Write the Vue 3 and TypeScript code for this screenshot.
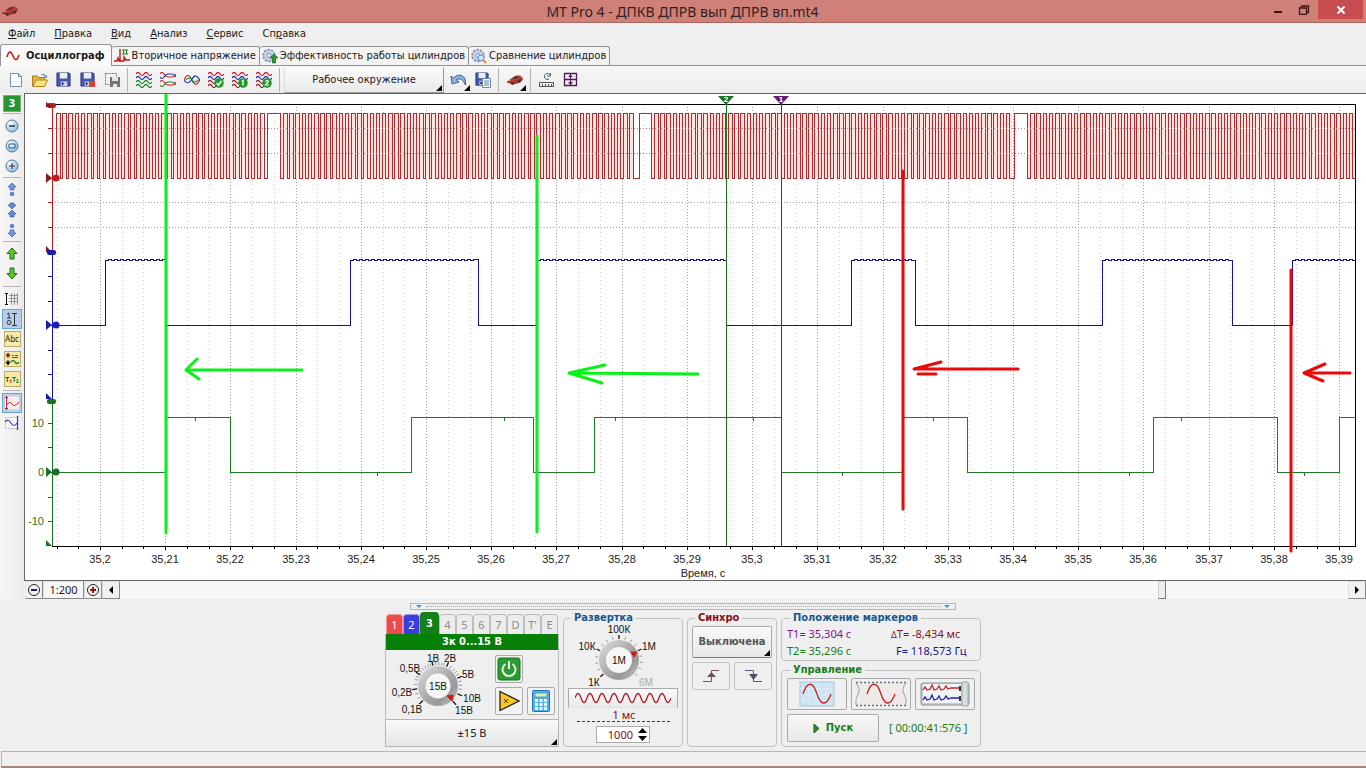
<script setup lang="ts">
import { computed, onBeforeUnmount, onMounted, ref } from 'vue'

interface MenuItem { pre: string; key: string; post: string }
const menu: MenuItem[] = [
  { pre: '', key: 'Ф', post: 'айл' },
  { pre: '', key: 'П', post: 'равка' },
  { pre: '', key: 'В', post: 'ид' },
  { pre: '', key: 'А', post: 'нализ' },
  { pre: '', key: 'С', post: 'ервис' },
  { pre: 'Сп', key: 'р', post: 'авка' },
]
const channelTabs = ['1', '2', '3', '4', '5', '6', '7', 'D', "T'", 'E']
const scroll = ref(851)
const points = ref('1000')

const chart = ref<HTMLElement | null>(null)
const w = ref(1341)
const h = ref(487)
let observer: ResizeObserver | null = null
onMounted(() => {
  observer = new ResizeObserver(() => {
    if (chart.value) {
      w.value = chart.value.clientWidth
      h.value = chart.value.clientHeight
    }
  })
  if (chart.value) observer.observe(chart.value)
})
onBeforeUnmount(() => observer?.disconnect())

// Signal space: x 0..1303, y 0..442, scaled to the size of the plot.
const left = 27
const top = 10
const X = (v: number): number => Math.round(left + (v * (w.value - 38)) / 1303)
const Y = (v: number): number => Math.round(top + (v * (h.value - 44)) / 442)

const ticks = computed(() => {
  const out: { x: number; major: boolean; label: string }[] = []
  for (let i = -2; i <= 57; i++) {
    const major = i % 3 === 0
    const t = 35.2 + i / 300
    out.push({ x: X(48 + (i * 65.21) / 3), major, label: major ? String(Number(t.toFixed(2))).replace('.', ',') : '' })
  }
  return out
})

function teeth(): [number, number][] {
  const out: [number, number][] = []
  for (let i = 0; i < 34; i++) out.push([4 + i * 6.18, 7.6 + i * 6.18])
  out.push([215, 228])
  for (let i = 0; i < 57; i++) out.push([231 + i * 6.18, 234.6 + i * 6.18])
  out.push([587, 599])
  for (let i = 0; i < 58; i++) out.push([602 + i * 6.17, 605.6 + i * 6.17])
  out.push([962, 975])
  for (let i = 0; i < 52; i++) out.push([978 + i * 6.25, 981.6 + i * 6.25])
  return out
}
function square(pulses: [number, number][], low: number, high: number, ripple = false): string {
  let d = `M${X(0)} ${Y(low)}`
  for (const [a, b] of pulses) {
    const end = X(Math.min(b, 1303))
    d += `H${X(a)}V${Y(high)}`
    if (ripple) {
      for (let x = X(a) + 3, up = true; x < end - 2; x += 3, up = !up) d += `H${x}v${up ? -1 : 1}`
    }
    d += `H${end}`
    if (b < 1303) d += `V${Y(low)}`
  }
  if (pulses[pulses.length - 1][1] < 1303) d += `H${X(1303)}`
  return d
}
const redWave = computed(() => square(teeth(), 74, 9))
const bluePulses: [number, number][] = [[53, 114], [298, 426], [485, 674], [799, 863], [1050, 1180], [1240, 1310]]
const blueWave = computed(() => square(bluePulses, 221, 156, true))
const greenWave = computed(() =>
  square([[114, 178], [359, 481], [542, 729], [851, 915], [1101, 1225], [1287, 1310]], 368, 313))
const greenNoise = computed(() =>
  [[143, 313], [325, 368], [452, 313], [563, 313], [701, 313], [790, 368], [881, 313], [1077, 368], [1129, 313], [1252, 368]]
    .map(([x, y]) => `M${X(x)} ${Y(y)}v4`).join(''))
const axisTicks = (from: number[]): string => from.map((y) => `M${left - 4} ${Y(y)}h4`).join('')

function pen(pts: number[][]): string {
  return pts.map(([x, y], i) => `${i ? 'L' : 'M'}${X(x)} ${Y(y)}`).join('')
}
const greenPen = computed(() =>
  pen([[114, -12], [114, 429]]) + pen([[485, 32], [485, 428]]) +
  pen([[250, 266], [134, 266]]) + pen([[145, 255], [134, 266], [147, 275]]) +
  pen([[646, 270], [517, 269]]) + pen([[553, 261], [517, 269], [550, 279]]))
const redPen = computed(() =>
  pen([[851, 67], [851, 405]]) + pen([[1239, 166], [1239, 447]]) +
  pen([[966, 265], [862, 265], [889, 258]]) + pen([[866, 270], [884, 270]]) + pen([[867, 265], [875, 262]]) +
  pen([[1298, 269], [1252, 269]]) + pen([[1273, 260], [1252, 269], [1271, 277]]))

function knobTick(cx: number, cy: number, deg: number, r1: number, r2: number): string {
  const a = (deg * Math.PI) / 180
  const p = (r: number) => `${(cx + r * Math.cos(a)).toFixed(2)} ${(cy - r * Math.sin(a)).toFixed(2)}`
  return `M${p(r1)}L${p(r2)}`
}
const voltMajor = [224, 188, 148, 104, 66, 22, -22, -46].map((a) => knobTick(52, 36, a, 21, 26)).join('')
const voltMinor = [212, 200, 176, 164, 156, 140, 132, 124, 116, 110, 96, 88, 80, 74, 56, 46, 38, 30, 12, 2, -8].map((a) => knobTick(52, 36, a, 21, 24)).join('')
const voltLabels: [string, number, number][] = [['1В', 47, 12], ['2В', 64, 12], ['0,5В', 24, 22], ['5В', 82, 28], ['0,2В', 16, 46], ['10В', 86, 52], ['0,1В', 26, 63], ['15В', 78, 64]]
const rateMajor = [222, 154, 90, 26].map((a) => knobTick(52, 36, a, 21, 25)).join('')
const rateMinor = [205, 188, 172, 138, 122, 106, 74, 58, 42, 10, -6, -22, -40].map((a) => knobTick(52, 36, a, 21, 24)).join('')
const rateLabels: [string, number, number][] = [['100К', 52, 9], ['10К', 20, 26], ['1М', 82, 26], ['1К', 27, 62]]
</script>

<template>
  <div class="window">
    <svg class="defs" width="0" height="0" aria-hidden="true">
      <defs>
        <radialGradient id="ball" cx="35%" cy="30%" r="75%"><stop offset="0" stop-color="#fff" /><stop offset="1" stop-color="#86b9dc" /></radialGradient>
        <linearGradient id="metal" x1="0" y1="0" x2="1" y2="1"><stop offset="0" stop-color="#e0e0e0" /><stop offset=".5" stop-color="#aaa" /><stop offset=".7" stop-color="#999" /><stop offset="1" stop-color="#c8c8c8" /></linearGradient>
        <symbol id="car" viewBox="0 0 18 12"><path d="M0 8l5-4 5-3 5 0 3 3-1 3-5 3-5 1-7-2z" fill="#b5403a" /><path d="M5 5l4-3 5-.500-3 3z" fill="#5b3836" /><path d="M1 8l6 1 10-4" stroke="#8a211c" fill="none" /><path d="M1 6l3 1" stroke="#e9a7a0" /><circle cx="6" cy="10" r="1.500" fill="#333" /><circle cx="14" cy="7.500" r="1.500" fill="#333" /></symbol>
        <symbol id="floppy" viewBox="0 0 16 16"><path d="M1 1h13l1 1v13H1z" fill="#4458b0" stroke="#29347c" /><path d="M4 1h8v6H4z" fill="#e8eefa" /><path d="M5 10h7v5H5z" fill="#cfd4e0" /><path d="M6 11h2v3H6z" fill="#29347c" /></symbol>
        <symbol id="waves" viewBox="0 0 16 16"><g fill="none" stroke-width="1.300"><path d="M0 2q2-3 4 0t4 0t4 0t4 0" stroke="#d02030" /><path d="M0 6q2-3 4 0t4 0t4 0t4 0" stroke="#2030c0" /><path d="M0 10q2-3 4 0t4 0t4 0t4 0M0 14q2-3 4 0t4 0t4 0t4 0" stroke="#138a20" /></g></symbol>
        <symbol id="waves2" viewBox="0 0 16 16"><g fill="none" stroke-width="1.300"><path d="M0 2q2-3 4 0t4 0t4 0t4 0" stroke="#d02030" /><path d="M0 6q2-3 4 0t4 0t4 0t4 0" stroke="#2030c0" /><path d="M0 10q2-3 4 0t4 0M0 14q2-3 4 0t4 0" stroke="#a02030" /></g><circle cx="11" cy="11" r="4.800" fill="#259a2c" /></symbol>
        <symbol id="gear" viewBox="0 0 16 16"><circle cx="7" cy="7.500" r="5.500" fill="#c3cde3" stroke="#7f8fb4" stroke-width="2.500" stroke-dasharray="2.200 1.200" /><circle cx="7" cy="7.500" r="5" fill="#c9d3e8" /><circle cx="7" cy="7.500" r="2" fill="#f4f4f4" stroke="#7f8fb4" /></symbol>
      </defs>
    </svg>

    <header class="titlebar">
      <svg class="appicon" width="16" height="12"><use href="#car" width="16" height="12" /></svg>
      <h1>MT Pro 4 - ДПКВ ДПРВ вып ДПРВ вп.mt4</h1>
      <div class="winbtns">
        <button aria-label="Свернуть"><svg width="10" height="10"><path d="M1 7h8" stroke="#3b1614" stroke-width="2" /></svg></button>
        <button aria-label="Развернуть"><svg width="12" height="10"><path d="M1.500 3h7v6.500h-7z M3.500 3V1H10.500V7.500H9" fill="none" stroke="#3b1614" stroke-width="1.300" /></svg></button>
        <button class="close" aria-label="Закрыть"><svg width="10" height="10"><path d="M1.500 1.500l7 7M8.500 1.500l-7 7" stroke="#fff" stroke-width="2" /></svg></button>
      </div>
    </header>

    <nav class="menu">
      <button v-for="m in menu" :key="m.key">{{ m.pre }}<u>{{ m.key }}</u>{{ m.post }}</button>
    </nav>

    <div class="tabs" role="tablist">
      <button class="tab active" role="tab" aria-selected="true">
        <svg width="14" height="14"><path d="M1 8C3 1 5 2 7 7s4 5 6-1" fill="none" stroke="#c01818" stroke-width="1.500" /></svg>Осциллограф
      </button>
      <button class="tab" role="tab">
        <svg width="16" height="16"><path d="M0 13h3l1-3 1 3h1V2M6 13h4V9l2 3h4M6 14V1" fill="none" stroke="#c01818" stroke-width="1.400" /><path d="M8 2h6M8 6h6M9.500 2v4M12.500 2v4" stroke="#198522" fill="none" /></svg>Вторичное напряжение
      </button>
      <button class="tab" role="tab">
        <svg width="16" height="16"><use href="#gear" width="16" height="16" /><path d="M12 6l4 4h-2.500v5h-3v-5H8z" fill="#2f9a30" stroke="#14681a" stroke-width=".7" /></svg>Эффективность работы цилиндров
      </button>
      <button class="tab" role="tab">
        <svg width="16" height="16"><use href="#gear" width="16" height="16" /><path d="M12 12l3 3" stroke="#e08a2c" stroke-width="2" /><circle cx="10" cy="10" r="3" fill="#cfe8fb" stroke="#5d8fc4" /></svg>Сравнение цилиндров
      </button>
    </div>

    <div class="toolbar">
      <button class="tool" aria-label="Новый"><svg width="16" height="16"><path d="M2.500 1.500h8l3 3v10h-11z" fill="#fbfdff" stroke="#7a8fa8" /><path d="M10.500 1.500v3h3" fill="none" stroke="#7a8fa8" /></svg></button>
      <button class="tool" aria-label="Открыть"><svg width="16" height="16"><path d="M.5 14V4h5l1 1.500h6V14z" fill="#e8b53c" stroke="#a87a18" /><path d="M1 14.500L4 8h11.500l-3 6.500z" fill="#ffe084" stroke="#b4861e" /><path d="M9 3q3-3 5 1l1-1v3h-3l1-1q-1-2-4-2z" fill="#7a9ac0" /></svg></button>
      <button class="tool" aria-label="Сохранить"><svg width="16" height="16"><use href="#floppy" width="15" height="15" /></svg></button>
      <button class="tool" aria-label="Сохранить как"><svg width="16" height="16"><use href="#floppy" width="15" height="15" /><path d="M9 9h6v6H9z" fill="#d4482c" /></svg></button>
      <button class="tool" aria-label="Сохранить фрагмент"><svg width="16" height="16"><path d="M1.500 1.500h11v11h-11z" fill="none" stroke="#777" stroke-dasharray="2 1" /><path d="M6 5h10v10H6z" fill="#707478" /><path d="M8 5h6v4H8zM9 12h4v3H9z" fill="#e6e6e6" /></svg></button>
      <i class="vsep"></i>
      <button class="tool" aria-label="Сигналы"><svg width="16" height="16"><use href="#waves" width="16" height="16" /></svg></button>
      <button class="tool" aria-label="Наложение"><svg width="16" height="16"><g fill="none" stroke-width="1.200"><path d="M0 2q2-3 4 0t4 3 4 0 4-3" stroke="#d02030" /><path d="M0 5q2 3 4 0t4-3 4 0 4 3" stroke="#2030c0" /><path d="M0 10q2-3 4 0t4 3 4 0 4-3" stroke="#d02030" /><path d="M0 13q2 3 4 0t4-3 4 0 4 3" stroke="#138a20" /></g></svg></button>
      <button class="tool" aria-label="Совмещение"><svg width="16" height="16"><g fill="none" stroke-width="1.200"><path d="M0 8q4-9 8 0t8-1" stroke="#c02030" /><path d="M0 8q4 6 8-1t8 2" stroke="#2030a0" /><path d="M2 8q3-4 6 0t6 0" stroke="#138a20" /></g></svg></button>
      <button class="tool" aria-label="Применить"><svg width="16" height="16"><use href="#waves2" width="16" height="16" /><path d="M8.500 11l2 2 3-4" fill="none" stroke="#fff" stroke-width="1.500" /></svg></button>
      <button class="tool" aria-label="Набор 1"><svg width="16" height="16"><use href="#waves2" width="16" height="16" /><path d="M10 9.500l1-1v5" fill="none" stroke="#fff" stroke-width="1.300" /></svg></button>
      <button class="tool" aria-label="Набор 2"><svg width="16" height="16"><use href="#waves2" width="16" height="16" /><path d="M9.500 9.500q2-2 3 0L9.500 13h3.500" fill="none" stroke="#fff" stroke-width="1.200" /></svg></button>
      <i class="vsep"></i>
      <button class="env">Рабочее окружение</button>
      <button class="tool drop" aria-label="Отменить"><svg width="18" height="16"><path d="M1 4l1 8 7-2-2.500-2q5-4 9 5 1-9-6-10-3 0-6 3z" fill="#8fb4dc" stroke="#3e6392" /></svg></button>
      <button class="tool" aria-label="Сохранить окружение"><svg width="16" height="16"><use href="#floppy" width="14" height="14" /><path d="M7.500 6.500h8v9h-8z" fill="#f3f7fc" stroke="#6787ab" /><path d="M9 9h5M9 11h5M9 13h5" stroke="#6787ab" /></svg></button>
      <i class="vsep"></i>
      <button class="tool drop" aria-label="Автомобиль"><svg width="16" height="12"><use href="#car" width="16" height="12" /></svg></button>
      <i class="vsep"></i>
      <button class="tool" aria-label="Линейка"><svg width="16" height="16"><path d="M.5 10.500h14v4H.5zM3.500 12v2M6.500 12v2M9.500 12v2M12.500 12v2" fill="none" stroke="#555" /><path d="M10 7a3 3 0 1 1 1-4M11.500 1v3H8" fill="none" stroke="#45617b" /></svg></button>
      <button class="tool" aria-label="Выравнивание"><svg width="16" height="16"><path d="M1.500 1.500h12v12h-12zM1 7.500h13" fill="#f6eef6" stroke="#51184f" stroke-width="1.300" /><path d="M7.500 1v13" stroke="#51184f" /><path d="M5 5h5L7.500 2.500zM5 10h5l-2.500 3z" fill="#51184f" /></svg></button>
    </div>

    <main class="work">
      <aside class="side">
        <span class="badge">3</span>
        <hr />
        <button aria-label="Уменьшить"><svg width="14" height="14"><circle cx="7" cy="7" r="6" fill="url(#ball)" stroke="#54789c" /><path d="M4 7h6" stroke="#16385e" stroke-width="1.500" /></svg></button>
        <button aria-label="По размеру"><svg width="14" height="14"><circle cx="7" cy="7" r="6" fill="url(#ball)" stroke="#54789c" /><path d="M4 5h6v4H4z" fill="none" stroke="#2c5e92" /></svg></button>
        <button aria-label="Увеличить"><svg width="14" height="14"><circle cx="7" cy="7" r="6" fill="url(#ball)" stroke="#54789c" /><path d="M4 7h6M7 4v6" stroke="#442a64" stroke-width="1.200" /></svg></button>
        <hr />
        <button aria-label="Вверх"><svg width="14" height="16"><path d="M7 1l4 4H9v3H5V5H3z" fill="#7194df" stroke="#3d5fb0" stroke-width=".7" /><circle cx="7" cy="12" r="2.300" fill="#6085d4" /></svg></button>
        <button aria-label="Сжать"><svg width="14" height="16"><path d="M5 1h4v2h2L7 7 3 3h2zM7 8l4 4H9v3H5v-3H3z" fill="#6489db" stroke="#3d5fb0" stroke-width=".7" /></svg></button>
        <button aria-label="Вниз"><svg width="14" height="16"><circle cx="7" cy="4" r="2.300" fill="#6085d4" /><path d="M7 15l4-4H9V8H5v3H3z" fill="#7194df" stroke="#3d5fb0" stroke-width=".7" /></svg></button>
        <hr />
        <button aria-label="Канал вверх"><svg width="14" height="14"><path d="M7 1l5 5.500H9V12H5V6.500H2z" fill="#5cc62c" stroke="#206b17" /></svg></button>
        <button aria-label="Канал вниз"><svg width="14" height="14"><path d="M7 12l5-5.500H9V1H5v5.500H2z" fill="#5cc62c" stroke="#206b17" /></svg></button>
        <hr class="wide" />
        <button aria-label="Сетка"><svg width="16" height="14"><path d="M2.500 1v12M1 1.500h3M1 12.500h3" stroke="#111" /><path d="M5 3.500h9M5 6.500h9M5 9.500h9M7.500 1v12M10.500 1v12M13.500 1v12" stroke="#777" stroke-width=".7" /></svg></button>
        <button class="on" aria-label="Шкала"><svg width="16" height="16"><path d="M3 3l2-1v5M3 7h4M10.500 2v12M8 2.500h5M8 14.500h5" fill="none" stroke="#334" /><circle cx="5" cy="11.500" r="2" fill="none" stroke="#334" /></svg></button>
        <button class="yl" aria-label="Подписи"><span>Abc</span></button>
        <button class="yl" aria-label="Связь"><svg width="14" height="14"><path d="M3 1L1 4h4zM3 3v3" stroke="#8c1b14" fill="#8c1b14" /><path d="M3 13l-2-3h4zM3 11V8" stroke="#111" fill="#111" /><path d="M7 3.500h2M10 3.500h3M7 5.500h6" stroke="#a32" /><path d="M6 10q2-3 4 0t4 0" fill="none" stroke="#27842a" stroke-width="1.500" /></svg></button>
        <button class="yl" aria-label="Маркеры"><span><b class="ta">T₁</b><b class="tb">T₂</b></span></button>
        <hr />
        <button class="on" aria-label="График"><svg width="14" height="14"><path d="M0 .500h14v13H0z" fill="#fbecec" /><path d="M1.500 0v14M0 1.500h3M0 12.500h3M2 9q3-5 5-1t7-2" fill="none" stroke="#c42430" /></svg></button>
        <button aria-label="Ось справа"><svg width="16" height="14"><path d="M1.500 1.500h12v11h-12z" fill="#fbfbff" stroke="#9aa" stroke-dasharray="1 1" /><path d="M13.500 0v14M1 6q3-4 6 1t6 0" fill="none" stroke="#2840a8" stroke-width="1.200" /></svg></button>
      </aside>

      <section class="view">
        <div ref="chart" class="chart">
          <svg class="plot" :width="w" :height="h">
            <g shape-rendering="crispEdges" fill="none">
              <path :d="ticks.filter(t => !t.major).map(t => `M${t.x + .5} ${top}V${Y(442)}`).join('')" stroke="#cfcacb" stroke-dasharray="1 3" />
              <path :d="ticks.filter(t => t.major).map(t => `M${t.x + .5} ${top}V${Y(442)}`).join('')" stroke="#a49da0" stroke-dasharray="1 2" />
              <rect :x="X(4)" :y="Y(9)" :width="X(211) - X(4)" :height="Y(74) - Y(9)" fill="#fde4e1" />
              <rect :x="X(228)" :y="Y(9)" :width="X(582) - X(228)" :height="Y(74) - Y(9)" fill="#fde4e1" />
              <rect :x="X(599)" :y="Y(9)" :width="X(960) - X(599)" :height="Y(74) - Y(9)" fill="#fde4e1" />
              <rect :x="X(975)" :y="Y(9)" :width="X(1303) - X(975)" :height="Y(74) - Y(9)" fill="#fde4e1" />
              <path :d="redWave" stroke="#a82e32" />
              <path :d="`M${left} ${Y(24)}H${X(1303)}M${left} ${Y(49)}H${X(1303)}`" stroke="#c98282" stroke-dasharray="1 2" />
              <path :d="`M${left} ${Y(98)}H${X(1303)}M${left} ${Y(123)}H${X(1303)}`" stroke="#b79fa2" stroke-dasharray="1 2" />
              <path :d="blueWave" stroke="#15158a" />
              <path :d="greenWave" stroke="#1c7c24" />
              <path :d="greenNoise" stroke="#1c7c24" />
              <path :d="`M${left} ${top}H${X(1303)}V${Y(442)}H${left}`" stroke="#000" />
              <path :d="ticks.map(t => `M${t.x + .5} ${Y(442)}v${t.major ? 4 : 3}`).join('')" stroke="#000" />
              <path :d="`M${left} ${top}V${Y(147)}` + axisTicks([24, 49, 74, 98, 123])" stroke="#b01c1c" />
              <path :d="`M${left} ${Y(148)}V${Y(296)}` + axisTicks([172, 197, 221, 246, 270])" stroke="#1616a8" />
              <path :d="`M${left} ${Y(296)}V${Y(442)}` + axisTicks([319, 343, 368, 393, 417])" stroke="#187222" />
              <path :d="`M${X(674)} ${top}V${Y(442)}`" stroke="#1c7423" />
              <path :d="`M${X(729)} ${top}V${Y(442)}`" stroke="#741a7c" />
            </g>
            <g fill="#c41c1c"><rect :x="left - 5" :y="top - 1" width="9" height="5" rx="2" /><path :d="`M${left - 6} ${top - 2}l6 5h-6z`" fill="#8a1c1c" /><path :d="`M${left - 6} ${Y(74) - 5}l6 5-6 5z`" fill="#8a1c1c" /><circle :cx="left + 4" :cy="Y(74)" r="3.500" /><path :d="`M${left - 6} ${Y(147) - 5}l6 6h-6z`" fill="#8a1c1c" /></g>
            <g fill="#1c1cb0"><rect :x="left - 5" :y="Y(147) - 1" width="9" height="5" rx="2" /><path :d="`M${left - 6} ${Y(221) - 5}l6 5-6 5z`" /><circle :cx="left + 4" :cy="Y(221)" r="3.500" /><path :d="`M${left - 6} ${Y(295) - 6}l6 6h-6z`" /></g>
            <g fill="#187222"><rect :x="left - 5" :y="Y(295)" width="9" height="5" rx="2" /><path :d="`M${left - 6} ${Y(368) - 5}l6 5-6 5z`" /><circle :cx="left + 4" :cy="Y(368)" r="3.500" /><path :d="`M${left - 6} ${Y(442) - 6}l6 6h-6z`" /></g>
            <path :d="`M${X(674) - 8} ${top - 8}h16l-8 9z`" fill="#1c7423" />
            <path :d="`M${X(729) - 8} ${top - 8}h16l-8 9z`" fill="#6a1a70" />
            <g class="mk"><text :x="X(674)" :y="top - 2">2</text><text :x="X(729)" :y="top - 2">1</text></g>
            <g class="yaxis"><text :x="left - 8" :y="Y(319) + 4">10</text><text :x="left - 8" :y="Y(368) + 4">0</text><text :x="left - 8" :y="Y(417) + 4">-10</text></g>
            <g class="xaxis">
              <text v-for="t in ticks.filter(v => v.major)" :key="t.x" :x="t.x" :y="Y(442) + 17">{{ t.label }}</text>
              <text :x="X(651)" :y="Y(442) + 31">Время, с</text>
            </g>
            <g fill="none" stroke-width="3" stroke-linecap="round" stroke-linejoin="round">
              <path :d="greenPen" stroke="#0af01a" />
              <path :d="redPen" stroke="#ea0a0a" />
            </g>
          </svg>
        </div>
        <div class="scrollrow">
          <button class="sb" aria-label="Мельче"><svg width="14" height="14"><circle cx="7" cy="7" r="5.500" fill="#f4f4fc" stroke="#222" /><path d="M4 7h6" stroke="#1a1a80" stroke-width="2" /></svg></button>
          <button class="sb ratio">1:200</button>
          <button class="sb" aria-label="Крупнее"><svg width="14" height="14"><circle cx="7" cy="7" r="5.500" fill="#fff4f4" stroke="#222" /><path d="M4 7h6M7 4v6" stroke="#9a1414" stroke-width="2" /></svg></button>
          <button class="sb" aria-label="Влево"><svg width="8" height="8"><path d="M6 0v8L2 4z" /></svg></button>
          <input v-model="scroll" type="range" min="0" max="1000" aria-label="Прокрутка" />
          <button class="sb" aria-label="Вправо"><svg width="8" height="8"><path d="M2 0v8l4-4z" /></svg></button>
        </div>
      </section>
    </main>

    <div class="splitter"><i></i><span></span><i></i></div>

    <section class="panels">
      <div class="channel">
        <div class="chtabs" role="tablist">
          <button v-for="(c, i) in channelTabs" :key="c" role="tab" :class="['cht', 'c' + (i + 1)]">{{ c }}</button>
        </div>
        <div class="chhead">3к 0...15 В</div>
        <div class="chbody">
          <svg class="knob" width="106" height="69" role="img" aria-label="Предел 15В">
            <path :d="voltMinor" stroke="#666" stroke-width=".7" />
            <path :d="voltMajor" stroke="#111" stroke-width="1.300" />
            <circle cx="52" cy="36" r="20" fill="url(#metal)" /><circle cx="52" cy="36" r="12.500" fill="#f6f6f6" />
            <path d="M61 46l6-1-1 6z" fill="#d01818" stroke="#d01818" />
            <text v-for="l in voltLabels" :key="l[0]" :x="l[1]" :y="l[2]">{{ l[0] }}</text>
            <text x="52" y="40">15В</text>
          </svg>
          <div class="chbtns">
            <button aria-label="Включить канал"><svg width="24" height="24"><rect x="1" y="1" width="22" height="22" rx="2" fill="#2c9c32" stroke="#157320" /><path d="M8.500 7a6.500 6.500 0 1 0 7 0M12 4v8" fill="none" stroke="#e4f8e4" stroke-width="2" /></svg></button>
            <i></i>
            <button aria-label="Усилитель"><svg width="24" height="24"><path d="M3 2.500L22 12 3 21.500z" fill="#f8c820" stroke="#222" stroke-width="1.300" /><path d="M7 10l4 4M11 10l-4 4" stroke="#5a3c08" /></svg></button>
            <button aria-label="Калькулятор"><svg width="20" height="24"><rect x="1.500" y="1.500" width="17" height="21" rx="1" fill="#55b0e8" stroke="#2373b4" /><path d="M4 4h12v4H4z" fill="#d4ecc8" stroke="#4b8e94" stroke-width=".7" /><path d="M4 11.500h12M4 15.500h12M4 19.500h12" stroke="#eef8ff" stroke-width="3" stroke-dasharray="3 1.500" /></svg></button>
          </div>
        </div>
        <button class="range">±15 В</button>
      </div>

      <fieldset class="sweep">
        <legend>Развертка</legend>
        <svg class="knob" width="112" height="64" role="img" aria-label="Частота 1М">
          <path :d="rateMinor" stroke="#777" stroke-width=".7" />
          <path :d="rateMajor" stroke="#111" stroke-width="1.300" />
          <circle cx="52" cy="36" r="20" fill="url(#metal)" /><circle cx="52" cy="36" r="13" fill="#f6f6f6" />
          <path d="M64 28h6l-3 5z" fill="#d01818" stroke="#d01818" />
          <text v-for="l in rateLabels" :key="l[0]" :x="l[1]" :y="l[2]">{{ l[0] }}</text>
          <text x="79" y="62" class="dim">6М</text>
          <text x="52" y="40">1М</text>
        </svg>
        <div class="wave"><svg width="96" height="14"><path d="M0 7q3-9 6 0t6 0t6 0t6 0t6 0t6 0t6 0t6 0t6 0t6 0t6 0t6 0t6 0t6 0t6 0t6 0" fill="none" stroke="#b81c28" stroke-width="1.300" /></svg></div>
        <div class="ms">1 мс</div>
        <div class="span"></div>
        <div class="spin"><input v-model="points" type="text" aria-label="Развертка, точки" /><svg width="9" height="13"><path d="M4.500 0L9 5H0zM4.500 13L9 8H0z" /></svg></div>
      </fieldset>

      <fieldset class="sync">
        <legend>Синхро</legend>
        <button class="off">Выключена</button>
        <div class="edges">
          <button aria-label="По фронту"><svg width="18" height="14"><path d="M1 12.500h8.500v-11H17" fill="none" stroke="#6e5961" /><path d="M5 8h9L9.500 3z" fill="#6e4f57" /></svg></button>
          <button aria-label="По спаду"><svg width="18" height="14"><path d="M1 1.500h8.500v11H18" fill="none" stroke="#555577" /><path d="M5 5h9l-4.500 6z" fill="#4c4c72" /></svg></button>
        </div>
      </fieldset>

      <div class="right">
        <fieldset class="markers">
          <legend>Положение маркеров</legend>
          <div class="t1">T1= 35,304 с</div><div class="dt"><small>Δ</small>T= -8,434 мс</div>
          <div class="t2">T2= 35,296 с</div><div class="f">F= 118,573 Гц</div>
        </fieldset>
        <fieldset class="control">
          <legend>Управление</legend>
          <div class="modes">
            <button aria-label="Экран"><svg width="36" height="26"><rect x="1" y="1" width="34" height="24" fill="#cde5f2" stroke="#a9c4d2" /><path d="M9.500 1v24M18.500 1v24M27.500 1v24M1 7.500h34M1 13.500h34M1 19.500h34" stroke="#dceef7" stroke-dasharray="2 1" /><path d="M4 13C8 0 14 0 18 13s10 11 14 0" fill="none" stroke="#c81c28" stroke-width="1.300" /></svg></button>
            <button aria-label="Лента"><svg width="52" height="26"><path d="M1 1h50q-6 6-2 12t2 12H1q6-6 2-12T1 1z" fill="#eeeae6" /><path d="M1 1.500h50M1 24.500h50" stroke="#667080" stroke-width="1.500" stroke-dasharray="2 2" /><path d="M1 2q5 6 2 11t-2 11M51 2q-5 6-2 11t2 11" fill="none" stroke="#9aa0a8" /><path d="M12 13C16 0 22 0 26 13s10 11 14 0" fill="none" stroke="#c81c28" stroke-width="1.300" /></svg></button>
            <button aria-label="Самописец"><svg width="52" height="26"><rect x="2" y="2" width="48" height="22" rx="2" fill="#c6cccc" stroke="#8a9292" /><path d="M4 3h38v19H4z" fill="#f1f4f6" /><path d="M43 1h6v24h-6z" fill="#d9dddd" stroke="#9aa" /><path d="M4 9l2-3 2 3 3-1 2-4 2 5 3-1 2-3 2 4 3-1 2-3 2 3 3-1h9" fill="none" stroke="#cc2028" stroke-width="1.300" /><path d="M4 19l2-3 2 3 3-1 2-4 2 5 3-1 2-3 2 4 3-1 2-3 2 3 3-1h9" fill="none" stroke="#2020a8" stroke-width="1.300" /><path d="M41 5v5M41 15v5" stroke="#333" stroke-width="2" /></svg></button>
          </div>
          <div class="go">
            <button><svg width="7" height="11"><path d="M1 1l5 4.500-5 4.500z" fill="#2c8c2c" stroke="#1a5c1c" /></svg>Пуск</button>
            <span>[ 00:00:41:576 ]</span>
          </div>
        </fieldset>
      </div>
    </section>

    <footer class="status"></footer>
  </div>
</template>

<style>
body { background: #efefef; overflow: hidden; }
</style>

<style scoped>
* { box-sizing: border-box; }
.window { height: 100vh; min-height: 600px; display: flex; flex-direction: column; background: #efefef; color: #1a1a1a; font: 11px/14px "Noto Sans", Tahoma, sans-serif; }
.window > * { flex: none; }
.defs { position: absolute; }
button, input { font: inherit; color: inherit; margin: 0; padding: 0; border: 0; background: none; }
button { display: flex; align-items: center; justify-content: center; white-space: nowrap; }
svg { display: block; flex: none; }
.titlebar { position: relative; height: 23px; display: flex; justify-content: space-between; padding-left: 2px; background: #cf8179; border-bottom: 1px solid #a96760; }
.appicon { margin-top: 5px; }
h1 { margin: 0; flex: 1; text-align: center; font: 14px/23px "Noto Sans", "Open Sans", sans-serif; color: #33201e; padding-left: 82px; }
.winbtns { display: flex; height: 19px; }
.winbtns button { width: 26px; }
.winbtns .close { width: 45px; background: #c84d4e; margin: 0 3px 0 1px; }
.menu { height: 21px; display: flex; padding-left: 8px; gap: 19px; align-items: center; }
.tabs { height: 22px; display: flex; align-items: flex-end; border-bottom: 1px solid #929292; }
.menu, .tabs, .env { font-family: "DejaVu Sans Condensed", "DejaVu Sans", Tahoma, sans-serif; }
.tab { height: 19px; gap: 2px; padding: 0 3px 0 2px; border: 1px solid #929292; border-bottom: 0; border-left-width: 0; border-radius: 3px 3px 0 0; background: #f3f3f3; }
.tab.active { height: 22px; margin-bottom: -1px; border-left-width: 1px; background: #fafafa; gap: 6px; padding: 0 6px 0 5px; }
.tab.active, .badge, .cht.c3, .chhead, legend, .off, .go button { font-family: "DejaVu Sans Condensed", "DejaVu Sans", Tahoma, sans-serif; font-weight: bold; }
.toolbar { height: 27px; display: flex; align-items: center; padding-left: 4px; background: linear-gradient(#f7f7f6, #ececec); }
.tool { width: 24px; height: 24px; position: relative; }
.vsep { width: 1px; height: 24px; background: #b4b4b4; margin: 0 4px 0 3px; }
.env { position: relative; width: 160px; height: 26px; border: 1px solid; border-color: #f4f4f4 #999 #999 #ddd; background: linear-gradient(#fafafa, #eaeaea); margin-right: 3px; }
.env::after, .drop::after, .off::after, .range::after { content: ""; position: absolute; right: 1px; bottom: 1px; border: 3px solid; border-color: transparent #000 #000 transparent; }
.window > .work { flex: 1 1 0; min-height: 0; display: flex; }
.side { width: 24px; display: flex; flex-direction: column; align-items: center; padding-top: 2px; background: linear-gradient(90deg, #f7f7f7, #ebebeb); }
.badge { width: 18px; height: 17px; background: #2b9432; border: 1px solid #6bb56f; color: #fff; line-height: 15px; text-align: center; }
.side hr { width: 18px; height: 1px; margin: 1px 0 2px; border: 0; background: #b5b5b5; flex: none; }
.side hr.wide { margin: 2px 0; }
.side button { width: 20px; height: 20px; flex: none; }
.side .on { background: #b9cfe8; border: 1px solid #6ba3cf; }
.side .yl { height: 16px; width: 17px; margin: 2px 0; background: #f6eaa6; border: 1px solid #b9ab6c; font-size: 8px; line-height: 12px; }
.ta { color: #8d1e1e; font-size: 7px; }
.tb { color: #1f771f; font-size: 7px; }
.view { flex: 1; min-width: 0; display: flex; flex-direction: column; }
.chart { flex: 1; min-height: 0; position: relative; background: #fff; border: 1px solid #666; border-right-width: 0; overflow: hidden; }
.plot { position: absolute; inset: 0; }
.xaxis text, .yaxis text { font: 11px "Liberation Sans", Arial, sans-serif; text-anchor: middle; fill: #222; }
.yaxis text { text-anchor: end; fill: #1b7423; }
.mk text { font: bold 7px "DejaVu Sans", sans-serif; text-anchor: middle; fill: #fff; }
.scrollrow { height: 18px; display: flex; background: #f8f8f8; padding-left: 1px; }
.sb { width: 18px; background: #f1f1f1; border: 1px solid; border-color: #ddd #888 #888 #ddd; }
.sb.ratio { width: 41px; background: #f7f7f7; }
.scrollrow input { flex: 1; min-width: 0; appearance: none; height: 18px; background: #f7f7f7; }
.scrollrow input::-webkit-slider-thumb { appearance: none; width: 8px; height: 18px; background: #efefef; border: 1px solid; border-color: #ccc #777 #777 #ccc; border-radius: 0; }
.splitter { height: 7px; width: 40%; margin: 4px auto 2px; border: 1px solid #aeb7bf; display: flex; align-items: center; justify-content: space-between; gap: 4px; padding: 0 5px; }
.splitter i { border: 3px solid transparent; border-top: 3px solid #4a94cc; border-bottom: 0; }
.splitter span { flex: 1; border-top: 1px dotted #76a9d3; }
.panels { display: flex; justify-content: center; gap: 4px; height: 135px; }
.channel { width: 174px; display: flex; flex-direction: column; }
.chtabs { display: flex; height: 22px; padding-left: 1px; align-items: flex-end; }
.cht { width: 17px; height: 20px; border: 1px solid #bdbdbd; border-bottom: 0; border-radius: 4px 4px 0 0; background: #ececec; color: #8b8b8b; }
.c1 { background: #ee4a4a; color: #fff; border-color: #f29b9b; }
.c2 { background: #3c3ce0; color: #fff; border-color: #9b9bec; }
.c3 { width: 19px; height: 22px; background: #138018; color: #fff; border-color: #138018; }
.chhead { height: 16px; background: #078007; color: #fff; text-align: center; line-height: 16px; border: solid #bbb; border-width: 0 1px; }
.chbody { height: 69px; display: flex; justify-content: space-between; border: solid #bbb; border-width: 0 1px; padding-right: 3px; }
.chbtns { display: grid; grid-template-columns: 28px 28px; gap: 4px; align-content: center; }
.chbtns button { height: 28px; border: 1px solid #aaa; border-radius: 2px; background: #f2f2f2; }
.range { position: relative; flex: 1; border: 1px solid #b5b5b5; background: linear-gradient(#f9f9f9, #e5e5e5); }
.knob text { font: 10px "Liberation Sans", Arial, sans-serif; text-anchor: middle; fill: #111; }
.knob .dim { fill: #aaa; }
fieldset { margin: 0; min-width: 0; padding: 0 4px; border: 1px solid #c0c0c0; border-radius: 4px; }
legend { margin-left: 3px; padding: 0 3px; height: 12px; line-height: 12px; color: #17578f; }
.sweep { width: 120px; }
.sweep > .knob { margin-left: -1px; }
.wave { height: 20px; display: flex; justify-content: center; align-items: center; border: 1px solid #aaa; border-bottom-color: #e4e4e4; background: linear-gradient(#fafafa, #eaeaea); }
.ms { height: 13px; line-height: 13px; text-align: center; color: #7b1018; padding-left: 2px; }
.span { height: 0; margin: 0 8px 4px 9px; border-top: 1px dashed #8d1822; }
.spin { display: flex; align-items: center; width: 54px; height: 17px; margin: 0 auto; background: #fff; border: 1px solid #aaa; padding-right: 2px; }
.spin input { flex: 1; min-width: 0; text-align: right; padding-right: 5px; color: #7b1018; }
.sync { width: 90px; }
.sync legend { color: #8b0f14; }
.off { position: relative; width: 100%; height: 32px; margin-top: 2px; border: 1px solid #aaa; border-bottom-color: #777; border-radius: 2px; background: linear-gradient(#f8f8f8, #e8e8e8); color: #555; }
.edges { display: flex; gap: 4px; margin-top: 4px; }
.edges button { flex: 1; height: 28px; border: 1px solid #c4c4c4; border-radius: 2px; }
.right { width: 200px; display: flex; flex-direction: column; justify-content: space-between; }
.markers { height: 49px; display: grid; grid-template-columns: 104px 1fr; align-content: start; line-height: 16px; padding-left: 5px; padding-top: 2px; white-space: nowrap; }
.t1 { color: #7a1890; }
.t2 { color: #158015; }
.dt { color: #8a1018; }
.f { color: #14148a; padding-left: 5px; }
small { font-size: 9px; }
.control { height: 83px; padding: 0 5px; }
.control legend { color: #158015; }
.modes { display: flex; gap: 4px; margin-top: 2px; }
.modes button { flex: 1; height: 32px; border: 1px solid #a9a9a9; border-radius: 2px; background: #f0f0f0; }
.go { display: flex; align-items: center; gap: 10px; margin-top: 4px; color: #158015; white-space: nowrap; }
.go button { width: 92px; height: 28px; gap: 6px; border: 1px solid #aaa; border-radius: 2px; background: linear-gradient(#f8f8f8, #e8e8e8); }
.status { height: 17px; margin-top: 4px; border: 1px solid #b5b8b0; border-right: 0; border-bottom: 2px solid #a58381; margin-left: 1px; }
</style>
